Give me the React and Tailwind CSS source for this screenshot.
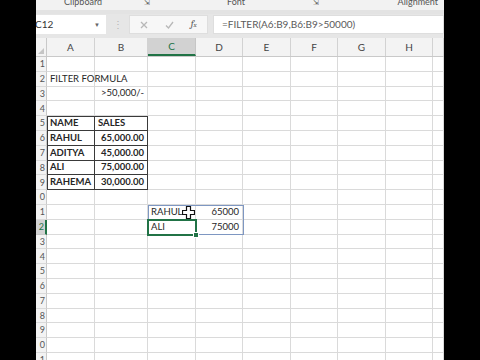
import React from 'react';

const cols = [
  { key: 'A', w: 48 },
  { key: 'B', w: 53 },
  { key: 'C', w: 48 },
  { key: 'D', w: 47 },
  { key: 'E', w: 48 },
  { key: 'F', w: 47 },
  { key: 'G', w: 48 },
  { key: 'H', w: 47 },
  { key: '', w: 11 },
];

// cell contents: [text, align, bold]
const cells = {
  A2: ['FILTER FORMULA', 'left', false],
  B3: ['>50,000/-', 'right', false],
  A5: ['NAME', 'left', true],
  B5: ['SALES', 'left', true],
  A6: ['RAHUL', 'left', true],
  B6: ['65,000.00', 'right', true],
  A7: ['ADITYA', 'left', true],
  B7: ['45,000.00', 'right', true],
  A8: ['ALI', 'left', true],
  B8: ['75,000.00', 'right', true],
  A9: ['RAHEMA', 'left', true],
  B9: ['30,000.00', 'right', true],
  C11: ['RAHUL', 'left', false],
  D11: ['65000', 'right', false],
  C12: ['ALI', 'left', false],
  D12: ['75000', 'right', false],
};

function Cell({ col, row }) {
  const id = col.key + row;
  const c = cells[id];
  const inTable = (col.key === 'A' || col.key === 'B') && row >= 5 && row <= 9;
  const shadows = [];
  if (inTable && col.key === 'A') shadows.push('inset 1px 0 0 #3a3a3a');
  if (inTable && row === 5) shadows.push('inset 0 1px 0 #3a3a3a');
  return (
    <div
      className={`h-full shrink-0 border-r border-b flex items-center px-[3px] overflow-visible whitespace-nowrap ${
        inTable ? 'border-[#3a3a3a]' : 'border-[#dadada]'
      } ${c && c[1] === 'right' ? 'justify-end' : 'justify-start'}`}
      style={{ width: col.w, boxShadow: shadows.join(',') || undefined }}
    >
      {c && (
        <span className={`text-[9.5px] text-[#262626] ${c[2] ? 'font-bold' : ''}`}>{c[0]}</span>
      )}
    </div>
  );
}

function Row({ n }) {
  const sel = n === 12;
  return (
    <div className="flex h-[14.8px] shrink-0">
      <div
        className={`w-[11px] shrink-0 border-b flex items-center justify-end pr-[1px] text-[9px] overflow-hidden ${
          sel
            ? 'bg-[#d2d2d2] border-[#c6c6c6] border-r-2 border-r-[#217346] text-[#217346]'
            : 'bg-[#f3f3f3] border-[#dadada] border-r border-r-[#c9c9c9] text-[#555]'
        }`}
      >
        {String(n).slice(-1)}
      </div>
      {cols.map((c) => (
        <Cell key={c.key} col={c} row={n} />
      ))}
    </div>
  );
}

function PlusCursor() {
  return (
    <svg width="13" height="13" viewBox="0 0 13 13" className="absolute left-[146px] top-[149px]">
      <path
        d="M4.5 0.5h4v4h4v4h-4v4h-4v-4h-4v-4h4z"
        fill="#fff"
        stroke="#111"
        strokeWidth="1.2"
        strokeLinejoin="miter"
      />
    </svg>
  );
}

export default function App() {
  const rows = Array.from({ length: 21 }, (_, i) => i + 1);
  return (
    <div className="w-[480px] h-[360px] bg-black flex justify-center overflow-hidden">
      <div
        className="w-[408px] h-full bg-white flex flex-col overflow-hidden"
        style={{ fontFamily: 'Lato, "Open Sans", sans-serif' }}
      >
        {/* ribbon group labels, cut at top */}
        <div className="h-[10px] shrink-0 bg-[#f2f2f2] flex items-end text-[9px] text-[#555] leading-[10px] relative overflow-hidden">
          <div className="flex w-full items-center translate-y-[-3px]">
            <span className="ml-[28px] w-[60px]">Clipboard</span>
            <span className="ml-[20px] text-[7px]">⇲</span>
            <span className="ml-[77px]">Font</span>
            <span className="ml-[68px] text-[7px]">⇲</span>
            <span className="ml-auto mr-[6px]">Alignment</span>
          </div>
        </div>
        <div className="h-[4px] shrink-0 bg-[#e3e3e3]" />
        {/* formula bar */}
        <div className="h-[21px] shrink-0 bg-[#e6e6e6] flex items-stretch py-[1px]">
          <div className="w-[70px] bg-white flex items-center justify-between pr-[6px] text-[10px] text-[#333]">
            <span className="-ml-[1px]">C12</span>
            <span className="text-[6px] text-[#666]">▼</span>
          </div>
          <div className="w-[23px] flex items-center justify-center text-[#b5b5b5] text-[10px]">⋮</div>
          <div className="w-[79px] bg-[#f7f7f7] border border-[#dedede] flex items-center justify-around px-[2px] text-[#aaa]">
            <svg width="8" height="8" viewBox="0 0 8 8">
              <path d="M1 1l6 6M7 1l-6 6" stroke="#b8b8b8" strokeWidth="1.3" />
            </svg>
            <svg width="9" height="8" viewBox="0 0 9 8">
              <path d="M1 4.5l2.5 2.5L8 1" stroke="#b8b8b8" strokeWidth="1.3" fill="none" />
            </svg>
            <span className="italic text-[10px] text-[#555] font-serif">
              f<span className="text-[7px]">x</span>
            </span>
          </div>
          <div className="w-[5px]" />
          <div className="flex-1 bg-white border border-[#dedede] flex items-center pl-[8px] text-[10px] text-[#5a5a5a]">
            =FILTER(A6:B9,B6:B9&gt;50000)
          </div>
        </div>
        <div className="h-[3px] shrink-0 bg-[#e6e6e6]" />
        {/* column headers */}
        <div className="flex h-[19px] shrink-0 bg-[#f3f3f3] border-b border-[#c9c9c9]">
          <div className="w-[11px] shrink-0 border-r border-[#c9c9c9] flex items-end justify-end p-[2px]">
            <svg width="6" height="6" viewBox="0 0 6 6">
              <path d="M6 0V6H0z" fill="#c5c5c5" />
            </svg>
          </div>
          {cols.map((c) => (
            <div
              key={c.key}
              className={`shrink-0 border-r flex items-center justify-center text-[10px] ${
                c.key === 'C'
                  ? 'bg-[#d2d2d2] border-[#c6c6c6] border-b-2 border-b-[#217346] text-[#217346]'
                  : 'border-[#d2d2d2] text-[#444]'
              }`}
              style={{ width: c.w }}
            >
              {c.key}
            </div>
          ))}
        </div>
        {/* grid */}
        <div className="relative flex flex-col">
          {rows.map((n) => (
            <Row key={n} n={n} />
          ))}
          {/* spill range outline */}
          <div className="absolute left-[112px] top-[148px] w-[96px] h-[30px] border border-[#7e97c2] pointer-events-none" />
          {/* active cell */}
          <div className="absolute left-[111px] top-[162px] w-[50px] h-[17px] border-2 border-[#217346] pointer-events-none" />
          <div className="absolute left-[157px] top-[175px] w-[6px] h-[6px] bg-[#217346] border border-white" />
          <PlusCursor />
        </div>
      </div>
    </div>
  );
}
